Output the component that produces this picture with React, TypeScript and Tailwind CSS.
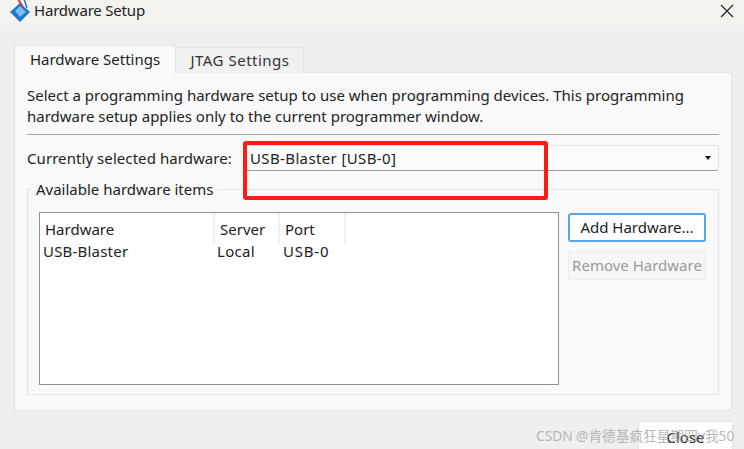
const columns = [
  { label: "Hardware", width: "w-[175px]", pad: "pl-[5px]" },
  { label: "Server", width: "w-[65px]", pad: "pl-[5px]" },
  { label: "Port", width: "w-[66px]", pad: "pl-[5px]" },
];

function AppIcon() {
  return (
    <svg width="22" height="24" viewBox="0 0 22 24" className="mt-[-8px]">
      <path d="M1 13 L11 4 L21 13 L11 23 Z" fill="#1c78cc" />
      <path d="M6 12 L11 7 L17 13 L11 18 Z" fill="#7dbcf0" />
      <path d="M9 0 L14 8" stroke="#e23b3b" strokeWidth="2" />
      <path d="M12 0 L16 8" stroke="#ffffff" strokeWidth="1.5" />
      <path d="M15 0 L18 9" stroke="#1c78cc" strokeWidth="1.5" />
    </svg>
  );
}

export default function App() {
  return (
    <div
      className="relative flex h-[449px] w-[744px] flex-col overflow-hidden bg-[#efefef] text-[15px] text-[#222] antialiased"
      style={{ fontFamily: '"Noto Sans", "Noto Sans CJK SC", sans-serif' }}
    >
      {/* Title bar */}
      <div className="flex h-[30px] flex-none items-center justify-between bg-[#f3f2ee] pl-[9px] pr-[9px]">
        <div className="flex items-center gap-[3px]">
          <AppIcon />
          <span className="mt-[-10px] text-[15px] leading-[20px] tracking-[-0.2px]">Hardware Setup</span>
        </div>
        <svg width="16" height="16" viewBox="0 0 16 16" className="mt-[-9px]">
          <path d="M2 2 L14 14 M14 2 L2 14" stroke="#222" strokeWidth="1.2" />
        </svg>
      </div>

      <div className="flex flex-1 flex-col pl-[14px] pr-[12px] pt-[15px]">
        {/* Tabs */}
        <div className="relative z-10 flex h-[28px] items-end">
          <div className="flex h-[28px] w-[162px] items-center justify-center border border-b-0 border-[#e4e4e4] bg-[#f9f9f9] pb-[1px]">
            Hardware Settings
          </div>
          <div className="flex h-[26px] w-[128px] items-center justify-center border border-b-0 border-l-0 border-[#e4e4e4] bg-[#f1f1f1] pl-[1px] tracking-[0.5px] text-[#333]">
            JTAG Settings
          </div>
        </div>

        {/* Panel */}
        <div className="mt-[-1px] flex h-[339px] flex-col border border-[#e4e4e4] bg-[#f9f9f9] px-[12px] pt-[12px]">
          <p className="text-[15px] leading-[21px]">
            Select a programming hardware setup to use when programming devices. This programming
            <br />
            hardware setup applies only to the current programmer window.
          </p>
          <div className="mt-[7px] h-px bg-[#a8a8a8]" />

          <div className="mt-[10px] flex h-[26px] items-center">
            <span className="w-[218px] tracking-[0.07px]">Currently selected hardware:</span>
            <div className="flex h-[26px] flex-1 items-center justify-between rounded-[3px] border border-[#e2e2e2] border-b-[#9a9a9a] bg-[#fcfcfc] pl-[4px] pr-[7px]">
              <span className="tracking-[0.37px]">USB-Blaster [USB-0]</span>
              <span className="h-0 w-0 border-x-[3.5px] border-t-[4px] border-x-transparent border-t-[#111]" />
            </div>
          </div>

          {/* Group box */}
          <div className="relative mt-[18px] flex h-[206px] gap-[9px] border border-[#e4e4e4] pl-[11px] pr-[12px] pt-[22px]">
            <span className="absolute left-[3px] top-[-11px] bg-[#f9f9f9] px-[5px] leading-[20px]">
              Available hardware items
            </span>
            <div className="h-[173px] w-[520px] flex-none border border-[#8e8e9c] bg-white">
              <div className="flex h-[31px]">
                {columns.map((col) => (
                  <div
                    key={col.label}
                    className={`flex h-full items-center border-r-2 border-[#f0f0f0] pt-[1px] ${col.width} ${col.pad}`}
                  >
                    {col.label}
                  </div>
                ))}
              </div>
              <div className="flex h-[14px] items-center leading-[14px]">
                <span className="w-[174px] pl-[3px] tracking-[0.2px]">USB-Blaster</span>
                <span className="w-[66px] pl-[3px] tracking-[0.3px]">Local</span>
                <span className="pl-[3px] tracking-[0.8px]">USB-0</span>
              </div>
            </div>
            <div className="flex flex-col gap-[9px] pt-[1px]">
              <button className="h-[29px] w-[138px] rounded-[3px] border-2 border-[#5aa5e6] bg-white text-[15px] leading-none">
                Add Hardware...
              </button>
              <button className="h-[29px] w-[138px] rounded-[3px] border border-[#ececec] bg-[#f6f6f6] text-[15px] leading-none text-[#9a9a9a]">
                Remove Hardware
              </button>
            </div>
          </div>
        </div>
      </div>

      {/* Close button runs off the bottom edge */}
      <button className="absolute left-[638px] top-[421px] h-[32px] w-[95px] rounded-[3px] border border-[#e2e2e2] bg-white text-[15px] leading-none">
        Close
      </button>

      {/* Red annotation */}
      <div className="absolute left-[243px] top-[141px] h-[59px] w-[305px] rounded-[3px] border-4 border-[#fb1c14]" />

      {/* Watermark */}
      <span className="absolute left-[536px] top-[427px] text-[13.7px] leading-[17px] text-[#a5a5a5]/80">
        CSDN @肯德基疯狂星期四v我50
      </span>
    </div>
  );
}
